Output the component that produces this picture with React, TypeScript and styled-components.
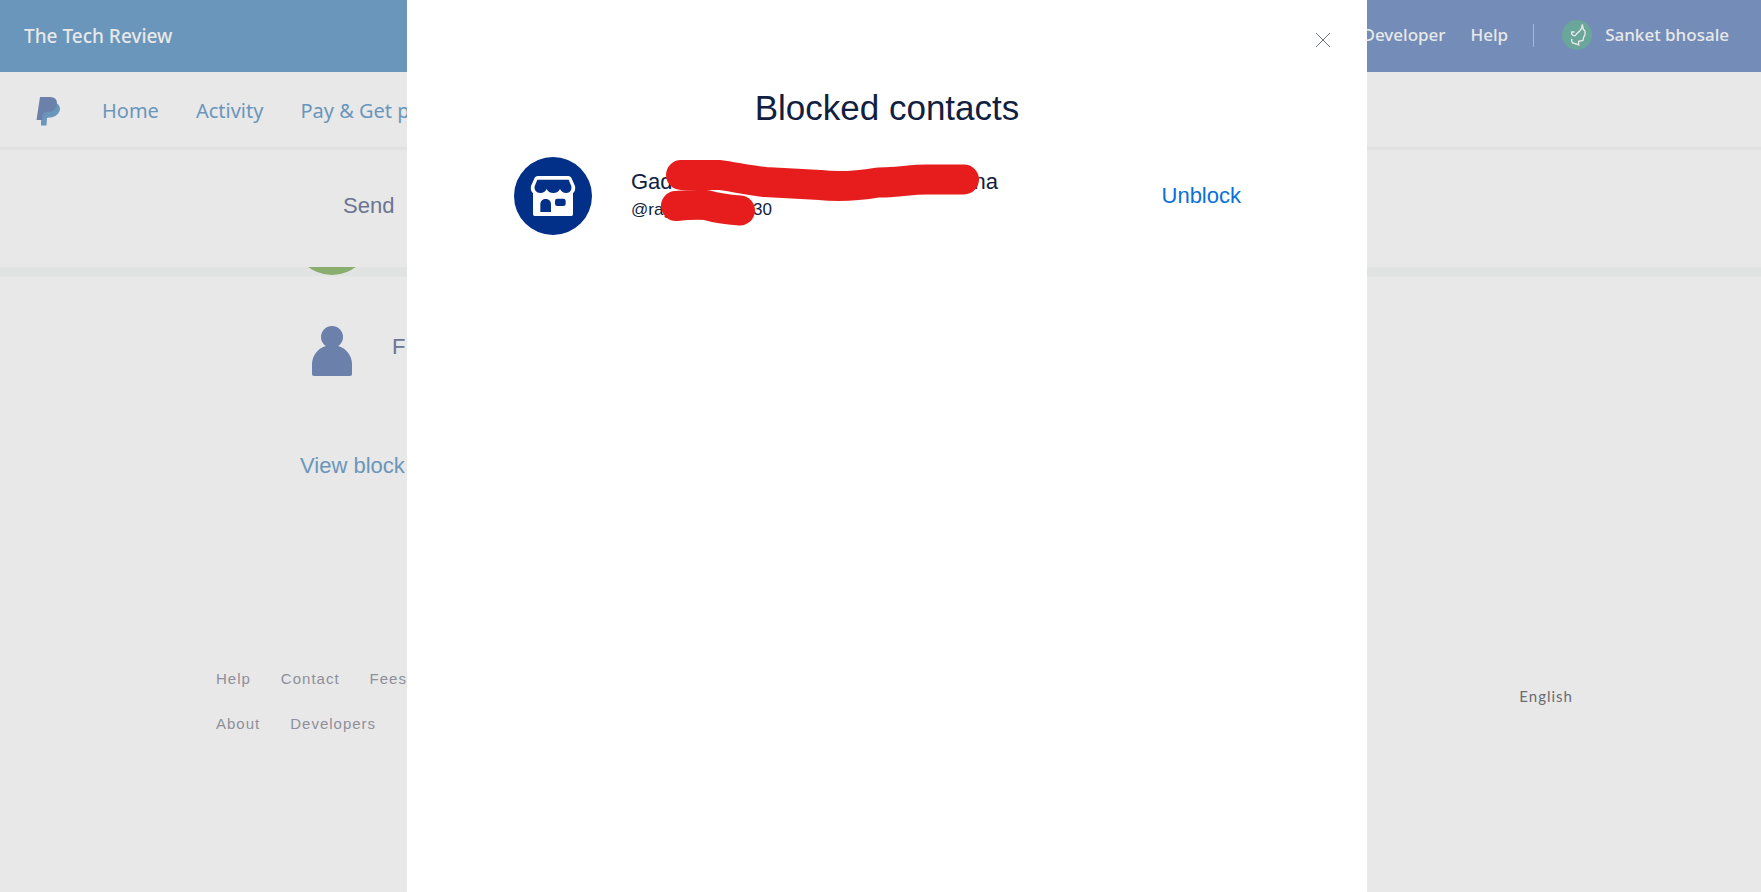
import React from "react";
import styled, { createGlobalStyle } from "styled-components";

const GlobalStyle = createGlobalStyle`
  * { box-sizing: border-box; }
  body {
    margin: 0;
    background: #e8e8e8;
    font-family: "Liberation Sans", Arial, sans-serif;
    color: #6c7592;
  }
  a { color: inherit; text-decoration: none; }
  h1, p, ul { margin: 0; padding: 0; }
  ul { list-style: none; }
`;

const Page = styled.div`
  min-height: 100vh;
  overflow: hidden;
`;

const TopBar = styled.header`
  display: flex;
  align-items: center;
  justify-content: space-between;
  height: 72px;
  padding: 0 32px 0 24px;
  background: linear-gradient(90deg, #6a96bb 40%, #738db8 70%);
  color: #e8e8e8;
  font-family: "Noto Sans", sans-serif;
  font-weight: 500;
`;

const Brand = styled.a`
  font-size: 19px;
  line-height: 24px;
`;

const Account = styled.nav`
  display: flex;
  align-items: center;
  font-size: 17px;
  line-height: 24px;
  padding-bottom: 2px;
`;

const AccountLink = styled.a`
  margin-right: 25px;
`;

const Profile = styled.a`
  display: flex;
  align-items: center;
  gap: 13px;
  padding-left: 28px;
`;

const Divider = styled.span`
  width: 1px;
  height: 23px;
  background: #a3b9dc;
`;

const MainNav = styled.nav`
  display: flex;
  align-items: center;
  gap: 37px;
  height: 78px;
  padding: 2px 0 0 36px;
  border-bottom: 3px solid #e1e1e1;
  color: #6a96bb;
  font-family: "Noto Sans", sans-serif;
  font-size: 20px;
`;

const Logo = styled.a`
  display: flex;
  margin-right: 4px;
`;

const SubNav = styled.nav`
  display: flex;
  align-items: center;
  height: 117px;
  padding: 0 0 6px 343px;
  font-size: 22px;
`;

const Content = styled.main`
  display: flex;
  flex-direction: column;
  height: 372px;
  padding-left: 300px;
  overflow: hidden;
  background: linear-gradient(#e0e3e2 9px, #e4e6e5 9px, #e4e6e5 10px, transparent 10px);
  font-size: 22px;
  line-height: 26px;
`;

const SendOption = styled.a<{ $tucked?: boolean }>`
  display: flex;
  align-items: center;
  flex-shrink: 0;
  gap: 40px;
  height: 78px;
  margin-top: ${(p) => (p.$tucked ? "-70px" : "37px")};
  padding-left: ${(p) => (p.$tucked ? "0" : "12px")};
`;

const GreenDisc = styled.span`
  width: 78px;
  height: 78px;
  margin-left: -7px;
  border-radius: 50%;
  background: #8aad70;
`;

const ViewBlocked = styled.a`
  margin-top: 63px;
  color: #6a96bb;
`;

const OptionLabel = styled.span`
  padding-bottom: 8px;
`;

const Footer = styled.footer`
  display: flex;
  align-items: center;
  justify-content: space-between;
  padding: 12px 188px 0 216px;
  color: #8e8f9b;
  font-size: 15px;
`;

const FooterRow = styled.ul`
  display: flex;
  gap: 30px;
  padding-top: 10px;
  line-height: 35px;
  letter-spacing: 1px;
`;

const Language = styled.a`
  color: #6b6b70;
  font-family: Lato, sans-serif;
  line-height: 18px;
  letter-spacing: 1px;
`;

const Overlay = styled.div`
  position: fixed;
  inset: 0;
  display: flex;
  justify-content: center;
  padding-left: 13px;
`;

const Dialog = styled.section`
  width: 960px;
  max-width: 100%;
  padding: 30px 126px 0 107px;
  background: #fff;
  color: #11203f;
`;

const DialogTop = styled.div`
  display: flex;
  justify-content: flex-end;
  margin-right: -92px;
`;

const CloseButton = styled.button`
  display: flex;
  padding: 2px;
  border: 0;
  background: none;
  cursor: pointer;
`;

const Title = styled.h1`
  margin: 38px -19px 0 0;
  padding-bottom: 29px;
  font-size: 35px;
  font-weight: 400;
  line-height: 40px;
  text-align: center;
`;

const Contact = styled.div`
  position: relative;
  display: flex;
  align-items: center;
  height: 78px;
`;

const Details = styled.div`
  flex: 1;
  padding: 0 0 3px 39px;
`;

const Masked = styled.p<{ $size: number; $line: number; $width: number }>`
  display: flex;
  justify-content: space-between;
  width: ${(p) => p.$width}px;
  font-size: ${(p) => p.$size}px;
  line-height: ${(p) => p.$line}px;
`;

const UnblockButton = styled.button`
  padding: 0;
  border: 0;
  background: none;
  color: #0a70d8;
  font: inherit;
  font-size: 22px;
  line-height: 26px;
  cursor: pointer;
`;

const Redaction = styled.svg`
  position: absolute;
  left: 0;
  top: 0;
  overflow: visible;
  pointer-events: none;
`;

const LogoMark = () => (
  <svg width="25" height="30" viewBox="0 0 25 30" aria-hidden="true">
    <path d="M6 13L20 7C24 9 25 13 23 16C21 20 17 21.500 13 21.500L11 22L10.500 29.500H5V25L8 14Z" fill="#6a96bb" />
    <path d="M4 1H14C20 1 22 5 20.500 10C19 14 15 16 10 16H8L7 18L6 24H0.500Z" fill="#6b80ab" />
    <path d="M20.500 8C19 13 16 15.500 10 15.500H8C7 17 6.500 19 6.500 21L6 24L8 17C9 16 11 16 13 16C18 15 21 12 20.500 8Z" fill="#6586b0" />
  </svg>
);

const Avatar = () => (
  <svg width="30" height="30" viewBox="0 0 90 90" aria-hidden="true">
    <circle cx="45" cy="45" r="45" fill="#6ba69b" />
    <path
      d="M38 36H29V42L34 47H40L44 41L53 33L59 25L61 13L64 28L69 33V44L65 52L63 61L50 64V75L43 72L32 69L29 64V56"
      fill="none"
      stroke="#e8e8e8"
      strokeWidth="4"
    />
  </svg>
);

const Person = () => (
  <svg width="40" height="50" viewBox="0 0 40 50" aria-hidden="true">
    <circle cx="20" cy="11" r="11" fill="#6b80ab" />
    <path d="M14 20H26C34 22 40 30 40 38V48Q40 50 38 50H2Q0 50 0 48V38C0 30 6 22 14 20Z" fill="#6b80ab" />
  </svg>
);

const Store = () => (
  <svg width="78" height="78" viewBox="42 36 234 234" aria-hidden="true">
    <circle cx="159" cy="153" r="117" fill="#022f87" />
    <path
      d="M113 93H205Q211 93 214 98L225 123Q228 137 219 145V208Q219 213 214 213H104Q99 213 99 208V145Q90 137 93 123L104 98Q107 93 113 93Z"
      fill="#fff"
    />
    <path
      d="M112 104H206L214 124C216 136 210 144 199 144C189 144 183 139 180 132C176 140 170 144 160 144C150 144 144 140 140 132C136 140 130 144 121 144C109 144 102 136 104 124Z"
      fill="#022f87"
    />
    <path d="M121 201V178C121 157 153 157 153 178V201Z" fill="#022f87" />
    <rect x="165" y="161" width="32" height="22" rx="7" fill="#022f87" />
  </svg>
);

const CloseIcon = () => (
  <svg width="16" height="16" viewBox="0 0 16 16" aria-hidden="true">
    <path d="M1 1L15 15M15 1L1 15" stroke="#6c7378" strokeWidth="1" />
  </svg>
);

export default function App() {
  return (
    <>
      <GlobalStyle />
      <Page>
        <TopBar>
          <Brand href="#">The Tech Review</Brand>
          <Account>
            <AccountLink href="#">Developer</AccountLink>
            <AccountLink href="#">Help</AccountLink>
            <Divider />
            <Profile href="#">
              <Avatar />
              Sanket bhosale
            </Profile>
          </Account>
        </TopBar>
        <MainNav>
          <Logo href="#" aria-label="PayPal">
            <LogoMark />
          </Logo>
          <a href="#">Home</a>
          <a href="#">Activity</a>
          <a href="#">Pay &amp; Get paid</a>
        </MainNav>
        <SubNav>
          <a href="#">Send</a>
        </SubNav>
        <Content>
          <SendOption href="#" $tucked aria-label="Send money">
            <GreenDisc />
          </SendOption>
          <SendOption href="#">
            <Person />
            <OptionLabel>F</OptionLabel>
          </SendOption>
          <ViewBlocked href="#">View block</ViewBlocked>
        </Content>
        <Footer>
          <div>
            <FooterRow>
              <li><a href="#">Help</a></li>
              <li><a href="#">Contact</a></li>
              <li><a href="#">Fees</a></li>
            </FooterRow>
            <FooterRow>
              <li><a href="#">About</a></li>
              <li><a href="#">Developers</a></li>
            </FooterRow>
          </div>
          <Language href="#">English</Language>
        </Footer>
      </Page>
      <Overlay>
        <Dialog role="dialog" aria-modal="true" aria-labelledby="blocked-title">
          <DialogTop>
            <CloseButton aria-label="Close">
              <CloseIcon />
            </CloseButton>
          </DialogTop>
          <Title id="blocked-title">Blocked contacts</Title>
          <Contact>
            <Store />
            <Details>
              <Masked $size={22} $line={30} $width={367}>
                <span>Gad</span>
                <span>na</span>
              </Masked>
              <Masked $size={17} $line={26} $width={141}>
                <span>@rag</span>
                <span>30</span>
              </Masked>
            </Details>
            <UnblockButton>Unblock</UnblockButton>
            <Redaction width="480" height="78" viewBox="514 157 480 78" aria-hidden="true">
              <g fill="none" stroke="#e71d1d" strokeWidth="30" strokeLinecap="round" strokeLinejoin="round">
                <path d="M681 175H720C734 177 748 180 765 182L820 185Q845 188 878 182.500C901 182.500 908 179.500 927 179.500H964" />
                <path d="M676 206Q690 204.500 706 205Q720 209 740 210.500" />
              </g>
            </Redaction>
          </Contact>
        </Dialog>
      </Overlay>
    </>
  );
}
